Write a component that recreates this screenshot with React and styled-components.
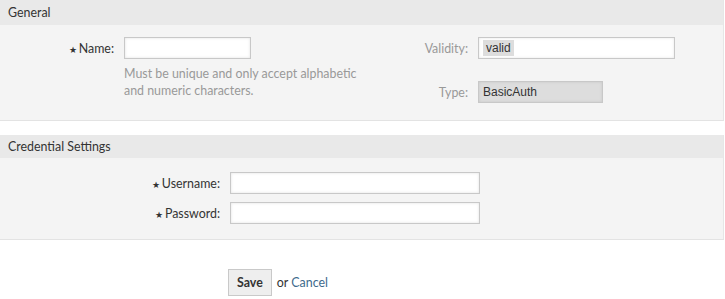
import React from 'react'
import styled, { createGlobalStyle } from 'styled-components'

const Global = createGlobalStyle`
  body {
    margin: 0;
    background: #fff;
    font-family: Lato, "Open Sans", sans-serif;
    font-size: 12.4px;
    color: #333;
  }
`

const Page = styled.div`
  width: 724px;
`

const Panel = styled.section`
  background: #f4f4f4;
  border-right: 1px solid #e6e6e6;
  border-bottom: 1px solid #e3e3e3;
  margin-bottom: ${p => p.gap || 0}px;
`

const PanelHeader = styled.h2`
  margin: 0;
  height: ${p => p.h || 25}px;
  line-height: ${p => p.h || 25}px;
  padding-left: 8px;
  background: #e9e9e9;
  font-size: 12.4px;
  font-weight: 400;
  color: #333;
`

const Body = styled.div`
  display: grid;
  grid-template-columns: ${p => p.cols || '1fr'};
  padding: ${p => p.pad || '12px 0 17px'};
`

const Column = styled.div`
  display: flex;
  flex-direction: column;
  gap: ${p => p.gap || 0}px;
`

const Row = styled.div`
  display: grid;
  grid-template-columns: ${p => p.label}px auto;
  column-gap: 10px;
  align-items: center;
`

const Label = styled.label`
  text-align: right;
  color: ${p => (p.muted ? '#999' : '#333')};
  white-space: nowrap;
`

const Star = styled.span`
  font-size: 9px;
  margin-right: 2px;
`

const Input = styled.input`
  box-sizing: border-box;
  width: ${p => p.w}px;
  height: 22px;
  border: 1px solid #c8c8c8;
  background: #fff;
  box-shadow: inset 0 0 3px rgba(0, 0, 0, 0.12);
  padding: 2px 4px;
  font-family: "Liberation Sans", Arial, sans-serif;
  font-size: 12px;
  color: #333;
  outline: none;
`

const Field = styled.div`
  box-sizing: border-box;
  width: ${p => p.w}px;
  height: 22px;
  border: 1px solid #c8c8c8;
  background: ${p => (p.disabled ? '#ddd' : '#fff')};
  box-shadow: inset 0 0 3px rgba(0, 0, 0, 0.1);
  display: flex;
  align-items: center;
  padding: 0 4px;
  font-family: "Liberation Sans", Arial, sans-serif;
  font-size: 12px;
  color: #333;
`

const Chip = styled.span`
  background: #ddd;
  padding: 2px 3px;
  line-height: 12px;
`

const Hint = styled.p`
  margin: 6px 0 0;
  color: #999;
  line-height: 17px;
  width: 240px;
`

const Actions = styled.div`
  display: flex;
  align-items: center;
  gap: 5px;
  padding: 29px 0 0 228px;
`

const Button = styled.button`
  box-sizing: border-box;
  height: 27px;
  padding: 0 8px;
  border: 1px solid #c9c9c9;
  background: #eee;
  font-family: Lato, "Open Sans", sans-serif;
  font-size: 12.4px;
  font-weight: 700;
  color: #333;
`

const Link = styled.a`
  color: #3d6a8c;
  text-decoration: none;
`

export default function App() {
  return (
    <Page>
      <Global />
      <Panel gap={14}>
        <PanelHeader>General</PanelHeader>
        <Body cols="362px 1fr">
          <Column>
            <Row label={114}>
              <Label><Star>★</Star>Name:</Label>
              <Input w={127} />
            </Row>
            <Row label={114}>
              <span />
              <Hint>Must be unique and only accept alphabetic and numeric characters.</Hint>
            </Row>
          </Column>
          <Column gap={22}>
            <Row label={106}>
              <Label muted>Validity:</Label>
              <Field w={197}><Chip>valid</Chip></Field>
            </Row>
            <Row label={106}>
              <Label muted>Type:</Label>
              <Field w={125} disabled>BasicAuth</Field>
            </Row>
          </Column>
        </Body>
      </Panel>
      <Panel>
        <PanelHeader h={23}>Credential Settings</PanelHeader>
        <Body pad="14px 0 15px">
          <Column gap={8}>
            <Row label={220}>
              <Label><Star>★</Star>Username:</Label>
              <Input w={250} />
            </Row>
            <Row label={220}>
              <Label><Star>★</Star>Password:</Label>
              <Input w={250} type="password" />
            </Row>
          </Column>
        </Body>
      </Panel>
      <Actions>
        <Button>Save</Button>
        <span>or <Link href="#">Cancel</Link></span>
      </Actions>
    </Page>
  )
}
